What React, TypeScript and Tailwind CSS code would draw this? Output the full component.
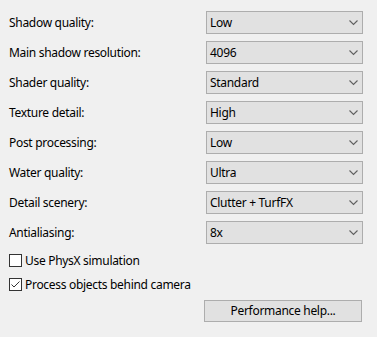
import React from "react";

const rows: [string, string][] = [
  ["Shadow quality:", "Low"],
  ["Main shadow resolution:", "4096"],
  ["Shader quality:", "Standard"],
  ["Texture detail:", "High"],
  ["Post processing:", "Low"],
  ["Water quality:", "Ultra"],
  ["Detail scenery:", "Clutter + TurfFX"],
  ["Antialiasing:", "8x"],
];

function Chevron() {
  return (
    <svg width="9" height="6" viewBox="0 0 9 6" className="shrink-0">
      <path d="M0.5 0.5 L4.5 4.5 L8.5 0.5" fill="none" stroke="#606060" strokeWidth="1.1" />
    </svg>
  );
}

function Checkbox({ checked }: { checked?: boolean }) {
  return (
    <div className="w-[13px] h-[13px] border border-[#333333] bg-white flex items-center justify-center shrink-0">
      {checked && (
        <svg width="11" height="11" viewBox="0 0 11 11">
          <path d="M1.5 5.5 L4 8 L9.5 2.5" fill="none" stroke="#333333" strokeWidth="1" />
        </svg>
      )}
    </div>
  );
}

export default function App() {
  return (
    <div
      className="w-[377px] h-[337px] bg-[#f0f0f0] text-[12px] text-black tracking-[-0.3px]"
      style={{ fontFamily: '"Noto Sans", "Open Sans", sans-serif' }}
    >
      <div className="pt-[11px] pl-[9px] pr-[14px] flex flex-col gap-[7px]">
        {rows.map(([label, value]) => (
          <div key={label} className="flex items-center h-[23px]">
            <div className="w-[197px] leading-none">{label}</div>
            <div className="w-[157px] h-[23px] border border-[#adadad] bg-[#e1e1e1] flex items-center pl-[3px] pr-[4px] justify-between">
              <span className="leading-none">{value}</span>
              <Chevron />
            </div>
          </div>
        ))}
      </div>
      <div className="pl-[9px] mt-[10px] flex flex-col gap-[11px]">
        <div className="flex items-center gap-[3px] h-[13px]">
          <Checkbox />
          <span className="leading-none">Use PhysX simulation</span>
        </div>
        <div className="flex items-center gap-[3px] h-[13px]">
          <Checkbox checked />
          <span className="leading-none">Process objects behind camera</span>
        </div>
      </div>
      <div className="flex justify-end pr-[15px] mt-[9px]">
        <button className="w-[158px] h-[22px] border border-[#adadad] bg-[#e1e1e1] flex items-center justify-center leading-none">
          Performance help...
        </button>
      </div>
    </div>
  );
}
